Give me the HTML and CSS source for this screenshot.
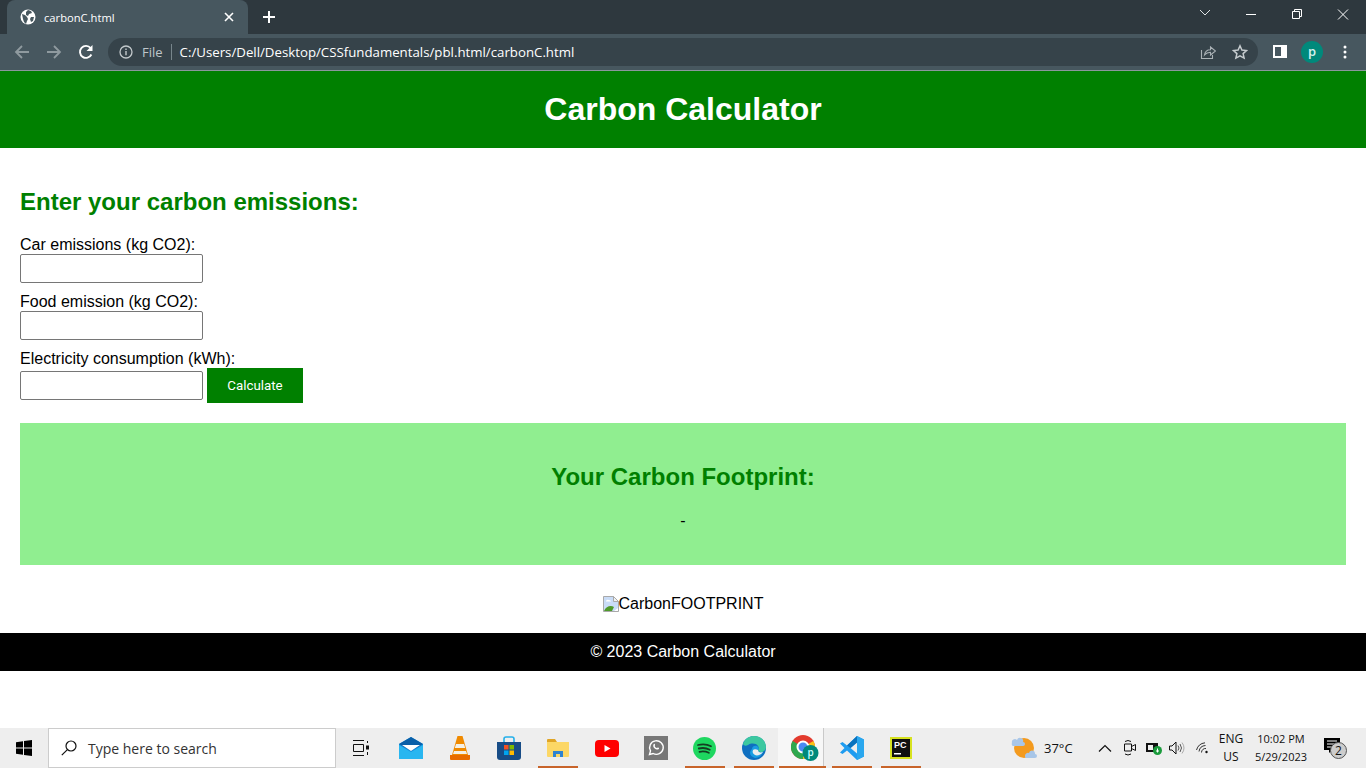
FILE: index.html
```html
<!DOCTYPE html>
<html>
<head>
    <title>carbonC.html</title>
    <link rel="stylesheet" href="styles.css">
</head>
<body>
    <div class="tabstrip">
        <div class="tab">
            <svg class="favicon" width="16" height="16" viewBox="0 0 16 16">
                <circle cx="8" cy="8" r="7.5" fill="#fff"/>
                <path d="M2 5l3 1 2 2 1 2-1 2-1 3-2-2-1-3zM8 1l3 1 1 2-3 1-1 2-2-1V3zM11 8h3l-1 4-2 1-1-3z" fill="#47575f"/>
            </svg>
            <span class="tab-title">carbonC.html</span>
            <svg class="tab-close" width="10" height="10" viewBox="0 0 10 10">
                <path d="M1 1l8 8M9 1l-8 8" stroke="#fff" stroke-width="1.6"/>
            </svg>
        </div>
        <svg class="new-tab" width="12" height="12" viewBox="0 0 12 12">
            <path d="M6 0v12M0 6h12" stroke="#fff" stroke-width="2"/>
        </svg>
        <div class="win-controls">
            <svg width="46" height="30" viewBox="0 0 46 30">
                <path d="M18 10l5 5 5-5" fill="none" stroke="#dfe3e5" stroke-width="1"/>
            </svg>
            <svg width="46" height="30" viewBox="0 0 46 30">
                <path d="M18 14.5h10" stroke="#fff" stroke-width="1"/>
            </svg>
            <svg width="46" height="30" viewBox="0 0 46 30">
                <path d="M18.5 11.5h7v7h-7zM20.5 11.5v-2h7v7h-2" fill="none" stroke="#fff" stroke-width="1"/>
            </svg>
            <svg width="46" height="30" viewBox="0 0 46 30">
                <path d="M18 9.5l10 10M28 9.5l-10 10" stroke="#fff" stroke-width="1"/>
            </svg>
        </div>
    </div>

    <div class="toolbar">
        <svg class="nav-icon" width="16" height="16" viewBox="0 0 16 16">
            <path d="M15 8H2M8 2L2 8l6 6" fill="none" stroke="#8f9a9f" stroke-width="1.8"/>
        </svg>
        <svg class="nav-icon" width="16" height="16" viewBox="0 0 16 16">
            <path d="M1 8h13M8 2l6 6-6 6" fill="none" stroke="#8f9a9f" stroke-width="1.8"/>
        </svg>
        <svg class="nav-icon" width="16" height="16" viewBox="0 0 16 16">
            <path d="M13.4 10.5A6 6 0 1 1 12.6 4" fill="none" stroke="#fff" stroke-width="1.9"/>
            <path d="M14.5 1v6h-6z" fill="#fff"/>
        </svg>
        <div class="omnibox">
            <svg class="info-icon" width="14" height="14" viewBox="0 0 14 14">
                <circle cx="7" cy="7" r="6" fill="none" stroke="#c3c9cc" stroke-width="1.3"/>
                <path d="M7 6v4.2M7 3.6v1.4" stroke="#c3c9cc" stroke-width="1.4"/>
            </svg>
            <span class="file-label">File</span>
            <span class="omni-sep"></span>
            <span class="url">C:/Users/Dell/Desktop/CSSfundamentals/pbl.html/carbonC.html</span>
            <svg class="share-icon" width="16" height="16" viewBox="0 0 16 16">
                <path d="M1.5 6v8.5h11V11" fill="none" stroke="#aab2b6" stroke-width="1.1"/>
                <path d="M4.5 11c.5-3.5 3-5.2 6-5.2V3l5 4-5 4V8.2c-2.5 0-4.5 1-6 2.8z" fill="none" stroke="#aab2b6" stroke-width="1.1"/>
            </svg>
            <svg class="star-icon" width="16" height="16" viewBox="0 0 16 16">
                <path d="M8 1.8L9.900 6l4.600.5-3.400 3.100 1 4.500L8 11.800l-4.100 2.300 1-4.500L1.500 6.500 6.100 6z" fill="none" stroke="#c5cbce" stroke-width="1.5"/>
            </svg>
        </div>
        <svg class="panel-icon" width="14" height="13" viewBox="0 0 14 13">
            <path d="M0 0h14v13H0z" fill="#fff"/>
            <path d="M2 2h6v9H2z" fill="#47575f"/>
        </svg>
        <div class="avatar">p</div>
        <svg class="menu-icon" width="4" height="14" viewBox="0 0 4 14">
            <circle cx="2" cy="2" r="1.5" fill="#fff"/>
            <circle cx="2" cy="7" r="1.5" fill="#fff"/>
            <circle cx="2" cy="12" r="1.5" fill="#fff"/>
        </svg>
    </div>

    <div class="page">
        <header class="site-header">
            <h1>Carbon Calculator</h1>
        </header>

        <main class="content">
            <h2>Enter your carbon emissions:</h2>
            <form class="calc-form">
                <label for="car">Car emissions (kg CO2):</label>
                <input type="text" id="car">
                <label for="food">Food emission (kg CO2):</label>
                <input type="text" id="food">
                <label for="elec">Electricity consumption (kWh):</label>
                <div class="last-row">
                    <input type="text" id="elec">
                    <button type="button">Calculate</button>
                </div>
            </form>

            <section class="result">
                <h2>Your Carbon Footprint:</h2>
                <p>-</p>
            </section>

            <div class="broken-img">
                <svg width="16" height="16" viewBox="0 0 16 16">
                    <path d="M.5.5h10l5 5v10H.5z" fill="#c9dcf7" stroke="#a9a9a9"/>
                    <path d="M3 5q1-2 3-1 2 0 2 1.500H3z" fill="#fff"/>
                    <path d="M1 15c2-5 7-6 10-4l-2 4z" fill="#4f9a2a"/>
                    <path d="M11 15l4-3v3z" fill="#fff"/>
                    <path d="M10.5.5v5h5z" fill="#f2f2f2" stroke="#a9a9a9"/>
                </svg><span>CarbonFOOTPRINT</span>
            </div>
        </main>

        <footer class="site-footer">© 2023 Carbon Calculator</footer>
    </div>

    <div class="taskbar">
        <div class="start">
            <svg width="16" height="16" viewBox="0 0 16 16">
                <path d="M0 2.300l7-1V7.500H0zM8 1.100l8-1.100v7.500H8zM0 8.500h7v6.200l-7-1zM8 8.500h8V16l-8-1.100z" fill="#000"/>
            </svg>
        </div>
        <div class="search">
            <svg width="16" height="16" viewBox="0 0 16 16">
                <circle cx="10" cy="6" r="5" fill="none" stroke="#111" stroke-width="1.2"/>
                <path d="M6.4 9.600L.8 15.200" stroke="#111" stroke-width="1.2"/>
            </svg>
            <span>Type here to search</span>
        </div>
        <div class="task-view">
            <svg width="16" height="16" viewBox="0 0 16 16">
                <path d="M0 .5h11M0 15.500h11M.5 4.500h10v7H.5zM14.500 1v2M14.500 12v3" fill="none" stroke="#111" stroke-width="1"/>
                <path d="M13 5.500h3v4h-3z" fill="#111"/>
            </svg>
        </div>

        <div class="app">
            <svg width="24" height="22" viewBox="0 0 24 22">
                <path d="M0 7L12 0l12 7v15H0z" fill="#1490df"/>
                <path d="M0 7L12 0l12 7-12 7z" fill="#0a5fa8"/>
                <path d="M3 8h18l-9 6z" fill="#fff"/>
                <path d="M0 8l12 7 12-7v14H0z" fill="#29b6f0"/>
            </svg>
        </div>
        <div class="app">
            <svg width="20" height="24" viewBox="0 0 20 24">
                <path d="M7.500 0h5L18 19H2z" fill="#f08a00"/>
                <path d="M6 8h8l1.200 4H4.800zM4 15h12l1 3H3z" fill="#f4f0e6"/>
                <path d="M0 19h20v4q0 1-1 1H1q-1 0-1-1z" fill="#e86c00"/>
            </svg>
        </div>
        <div class="app">
            <svg width="24" height="24" viewBox="0 0 24 24">
                <path d="M7 7V3q0-2 2-2h6q2 0 2 2v4" fill="none" stroke="#25b0ea" stroke-width="1.6"/>
                <path d="M0 6h24v15q0 3-3 3H3q-3 0-3-3z" fill="#174c86"/>
                <path d="M7 9h4.500v4.500H7z" fill="#f25022"/>
                <path d="M12.500 9H17v4.500h-4.500z" fill="#7fba00"/>
                <path d="M7 14.500h4.500V19H7z" fill="#00a4ef"/>
                <path d="M12.500 14.500H17V19h-4.500z" fill="#ffb900"/>
            </svg>
        </div>
        <div class="app running">
            <svg width="22" height="18" viewBox="0 0 22 18">
                <path d="M0 1q0-1 1-1h7l2 3H0z" fill="#e0a526"/>
                <path d="M0 3h22v14q0 1-1 1H1q-1 0-1-1z" fill="#fcd766"/>
                <path d="M6 12h10v6h-3v-3H9v3H6z" fill="#2f83d1"/>
            </svg>
        </div>
        <div class="app">
            <svg width="24" height="17" viewBox="0 0 24 17">
                <rect width="24" height="17" rx="4" fill="#f00"/>
                <path d="M9.500 5l6 3.500-6 3.500z" fill="#fff"/>
            </svg>
        </div>
        <div class="app">
            <svg width="24" height="24" viewBox="0 0 24 24">
                <path d="M0 0h24v24H0z" fill="#777"/>
                <path d="M5.500 18.500l1-3.600a6.800 6.800 0 1 1 2.600 2.600z" fill="none" stroke="#fff" stroke-width="1.4"/>
                <path d="M9.500 8.500c.5-1 1.200-.8 1.500 0 .3 1-.5 1.200-.2 1.800.5 1 1.200 1.500 2 1.800.6 0 .8-1 1.500-.6 1 .5 1 1.200.2 1.800-1 .7-3 0-4.300-1.300-1-1-1.200-2.500-.7-3.500z" fill="#fff"/>
            </svg>
        </div>
        <div class="app running">
            <svg width="23" height="23" viewBox="0 0 23 23">
                <circle cx="11.500" cy="11.500" r="11.500" fill="#1ed760"/>
                <path d="M5 8c4-1 9-.8 13 1.200M5.800 11.500c3.500-.8 7.700-.5 11 1.200M6.500 14.800c3-.6 6.500-.4 9.300 1" fill="none" stroke="#143d22" stroke-width="1.8" stroke-linecap="round"/>
            </svg>
        </div>
        <div class="app running">
            <svg width="24" height="24" viewBox="0 0 24 24">
                <circle cx="12" cy="12" r="12" fill="#0f6fc0"/>
                <path d="M1 8C3 2 8 0 12 0c7 0 12 5 12 11 0 3-2 5-5 5-2 0-3-1-3-2 1-1 1-3 0-4-2-3-7-3-10-1-2 1-4 1-5-1z" fill="#3cc8a0"/>
                <path d="M10 13c0-2 2-4 5-3 2 1 2 3 1 4 0 2 2 3 5 2-1 3-4 6-8 6-3-1-5-3-5-5 0-2 1-3 2-4z" fill="#1b9de2"/>
                <path d="M11 14c1-1 3-1 5 0 0 2 2 3 5 2-2 3-6 4-8 3-2-1-3-3-2-5z" fill="#eeeeee"/>
            </svg>
        </div>
        <div class="app running active">
            <svg class="chrome-icon" width="28" height="26" viewBox="0 0 28 26">
                <circle cx="12" cy="12" r="12" fill="#e33b2e"/>
                <path d="M12 12L1.600 6A12 12 0 0 0 12 24z" fill="#2fa84f"/>
                <path d="M12 12v12A12 12 0 0 0 22.400 6z" fill="#fbc116"/>
                <circle cx="12" cy="12" r="5.500" fill="#4a8af4" stroke="#fff" stroke-width="2"/>
                <circle cx="19.500" cy="18" r="8" fill="#00897b"/>
                <text x="19.500" y="21" class="badge-text">p</text>
            </svg>
        </div>
        <div class="app running">
            <svg width="24" height="24" viewBox="0 0 24 24">
                <path d="M17 0l7 3.500v17L17 24 7 14.500 2.500 18 0 16.500 4.500 12 0 7.500 2.500 6 7 9.500z" fill="#1f9cf0"/>
                <path d="M17 6.500L10.500 12l6.500 5.500z" fill="#eeeeee"/>
                <path d="M17 0l7 3.500v17L17 24z" fill="#2aa7ee"/>
                <path d="M17 6.500L10.500 12 7 9.500 17 0z" fill="#0a72bd"/>
            </svg>
        </div>
        <div class="app running">
            <svg width="22" height="22" viewBox="0 0 22 22">
                <path d="M0 0h22v22H0z" fill="#d7e21f"/>
                <path d="M2 2h18v18H2z" fill="#111"/>
                <text x="4" y="11" class="pc-text">PC</text>
                <path d="M4 16h7v1.500H4z" fill="#fff"/>
            </svg>
        </div>

        <div class="tray">
            <svg class="weather" width="26" height="24" viewBox="0 0 26 24">
                <circle cx="13" cy="12" r="10" fill="#f39a1e"/>
                <path d="M1 7a3 3 0 0 1 5-3 3 3 0 0 1 6 2 2 2 0 0 1 0 4H3a2 2 0 0 1-2-3zM14 20a3 3 0 0 1 4-3 3 3 0 0 1 6 1 2 2 0 0 1 0 4h-9a2 2 0 0 1-1-2z" fill="#a8c6e8"/>
            </svg>
            <span class="temp">37°C</span>
            <svg class="caret" width="14" height="8" viewBox="0 0 14 8">
                <path d="M1 7.500l6-6 6 6" fill="none" stroke="#111" stroke-width="1.2"/>
            </svg>
            <svg class="tray-icon meet" width="14" height="18" viewBox="0 0 14 18">
                <path d="M1.500 5h7v7h-7zM8.500 7.500l4-2v6l-4-2zM2 2.500q3-2 6 0M2 15q3 2 6 0" fill="none" stroke="#111" stroke-width="1"/>
            </svg>
            <svg class="tray-icon" width="16" height="14" viewBox="0 0 16 14">
                <path d="M0 2h12v9H0z" fill="#111"/>
                <path d="M2 4h5v5H2z" fill="#eee"/>
                <circle cx="11.500" cy="9.500" r="4.500" fill="#1a9b3c"/>
                <path d="M10 10h3M11.500 7.500v4" stroke="#fff"/>
            </svg>
            <svg class="tray-icon" width="16" height="14" viewBox="0 0 16 14">
                <path d="M.5 5h2.500l4-4v12l-4-4H.5z" fill="none" stroke="#111" stroke-width="1"/>
                <path d="M9 4.500q2 2.500 0 5M11 3q3 4 0 8" fill="none" stroke="#555" stroke-width="1"/>
                <path d="M13 1.500q4 5.500 0 11" fill="none" stroke="#aaa" stroke-width="1"/>
            </svg>
            <svg class="tray-icon wifi" width="14" height="12" viewBox="0 0 14 12">
                <path d="M.5 8A10 10 0 0 1 9 .8M3 9.500A7 7 0 0 1 9.500 3.500M5.500 10.500A4 4 0 0 1 10 6.500" fill="none" stroke="#333" stroke-width="1"/>
                <circle cx="10.500" cy="10" r="1.200" fill="#111"/>
            </svg>
            <div class="lang"><span>ENG</span><span>US</span></div>
            <div class="clock"><span>10:02 PM</span><span>5/29/2023</span></div>
            <div class="notif">
                <svg width="16" height="16" viewBox="0 0 16 16">
                    <path d="M0 0h16v12H8l-3 3v-3H0z" fill="#000"/>
                    <path d="M3 3h10M3 6h10M3 9h7" stroke="#fff" stroke-width="1"/>
                </svg>
                <span class="notif-count">2</span>
            </div>
        </div>
    </div>
</body>
</html>
```

FILE: styles.css
```css
* {
    box-sizing: border-box;
}

html, body {
    height: 100%;
}

body {
    margin: 0;
    display: flex;
    flex-direction: column;
    height: 100vh;
    overflow: hidden;
    font-family: "Liberation Sans", Arial, sans-serif;
    font-size: 16px;
    color: #000;
    background-color: #fff;
}

/* browser bits */
.tabstrip {
    display: flex;
    align-items: center;
    flex: 0 0 34px;
    padding-left: 7px;
    background-color: #2e383e;
}

.tab {
    display: flex;
    align-items: center;
    width: 241px;
    height: 34px;
    padding: 0 0 0 13px;
    background-color: #47575f;
    border-radius: 8px 8px 0 0;
}

.tab-title {
    width: 163px;
    margin-left: 8px;
    color: #fff;
    font-family: "Open Sans", sans-serif;
    font-size: 11.2px;
}

.tab-close {
    margin-left: 17px;
}

.new-tab {
    margin-left: 15px;
}

.win-controls {
    display: flex;
    margin-left: auto;
    align-self: flex-start;
}

.win-controls svg {
    display: block;
}

.toolbar {
    display: flex;
    align-items: center;
    flex: 0 0 37px;
    padding: 0 0 1px 14px;
    background-color: #47575f;
    border-bottom: 1px solid #8b979c;
}

.nav-icon {
    margin-right: 16px;
}

.omnibox {
    display: flex;
    align-items: center;
    width: 1150px;
    height: 28px;
    margin-left: -2px;
    padding-left: 11px;
    background-color: #36434a;
    border-radius: 14px;
}

.file-label {
    margin-left: 9px;
    color: #bfc6ca;
    font-family: "Open Sans", sans-serif;
    font-size: 13px;
}

.omni-sep {
    width: 1px;
    height: 16px;
    margin: 0 8px;
    background-color: #77858b;
}

.url {
    color: #fff;
    font-family: "Open Sans", sans-serif;
    font-size: 13.25px;
}

.share-icon {
    margin-left: auto;
}

.star-icon {
    margin: 0 10px 0 16px;
}

.panel-icon {
    margin-left: 15px;
}

.avatar {
    width: 22px;
    height: 22px;
    margin-left: 14px;
    border-radius: 50%;
    background-color: #00897b;
    color: #d6f2ee;
    font-family: "Open Sans", sans-serif;
    font-size: 13px;
    font-weight: 600;
    line-height: 20px;
    text-align: center;
}

.menu-icon {
    margin-left: 20px;
}

/* the actual page */
.page {
    flex: 1;
    min-height: 0;
}

.site-header {
    padding: 20px;
    background-color: #008000;
    color: #fff;
    text-align: center;
}

h1 {
    margin: 0;
    font-size: 32px;
    line-height: 37px;
}

.content {
    padding: 20px 20px 0;
}

h2 {
    margin: 20px 0;
    color: #008000;
    font-size: 24px;
    line-height: 27px;
}

.calc-form label {
    display: block;
    line-height: 19px;
}

.calc-form input {
    display: block;
    width: 183px;
    height: 29px;
    margin: 0 0 9px;
    padding: 5px;
    border: 1px solid #767676;
    border-radius: 2px;
    background-color: #fff;
}

.last-row {
    display: flex;
    align-items: flex-end;
}

.last-row input {
    margin: 0 0 3px;
}

.last-row button {
    width: 96px;
    height: 35px;
    margin-left: 4px;
    border: none;
    background-color: #008000;
    color: #fff;
    font-family: Roboto, sans-serif;
    font-size: 13.33px;
    font-weight: 400;
}

.result {
    margin-top: 20px;
    height: 142px;
    padding: 20px;
    background-color: #90ee90;
    text-align: center;
}

.result h2 {
    margin-bottom: 22px;
}

.result p {
    margin: 0;
    line-height: 18px;
}

.broken-img {
    display: flex;
    justify-content: center;
    align-items: center;
    height: 68px;
    padding-top: 9px;
}

.site-footer {
    height: 38px;
    background-color: #000;
    color: #fff;
    line-height: 38px;
    text-align: center;
}

/* windows taskbar */
.taskbar {
    display: flex;
    align-items: center;
    flex: 0 0 40px;
    background-color: #eeeeee;
    color: #111;
    font-family: "Open Sans", sans-serif;
}

.start {
    display: flex;
    justify-content: center;
    align-items: center;
    width: 48px;
    height: 40px;
}

.search {
    display: flex;
    align-items: center;
    width: 288px;
    height: 40px;
    padding-left: 12px;
    background-color: #fff;
    border: 1px solid #cccccc;
    font-size: 14px;
    color: #333;
}

.search span {
    margin-left: 11px;
}

.task-view {
    display: flex;
    justify-content: center;
    align-items: center;
    width: 50px;
    height: 40px;
}

.app {
    display: flex;
    justify-content: center;
    align-items: center;
    width: 49px;
    height: 40px;
    position: relative;
}

.app.running::after {
    content: "";
    position: absolute;
    left: 5px;
    right: 4px;
    bottom: 0;
    height: 2px;
    background-color: #c8642a;
}

.app.active {
    background: linear-gradient(to right, #f7f7f7 45px, #c9c9c9 45px, #c9c9c9 46px, transparent 46px);
}

.app.active::after {
    left: 1px;
    right: 1px;
}

.chrome-icon {
    margin-left: 4px;
}

.badge-text {
    fill: #cff;
    font-family: "Open Sans", sans-serif;
    font-size: 10px;
    font-weight: 600;
    text-anchor: middle;
}

.pc-text {
    fill: #fff;
    font-family: "Liberation Sans", sans-serif;
    font-size: 9px;
    font-weight: 700;
}

.tray {
    display: flex;
    align-items: center;
    height: 40px;
    margin-left: auto;
    font-size: 12px;
}

.weather {
    margin-right: 7px;
}

.temp {
    width: 32px;
    margin-right: 22px;
    font-size: 13px;
}

.caret {
    margin-right: 11px;
}

.tray-icon {
    margin-right: 7px;
}

.tray-icon.meet {
    margin-right: 9px;
}

.wifi {
    margin-left: 4px;
    margin-right: 6px;
}

.lang, .clock {
    display: flex;
    flex-direction: column;
    align-items: center;
    line-height: 18px;
}

.lang {
    width: 30px;
}

.clock {
    width: 64px;
    margin-left: 3px;
    font-size: 11px;
}

.notif {
    position: relative;
    width: 36px;
    height: 20px;
    margin: 0 11px 0 6px;
    padding-left: 5px;
}

.notif-count {
    position: absolute;
    left: 11px;
    top: 4px;
    width: 17px;
    height: 17px;
    border-radius: 50%;
    border: 1px solid #555;
    background-color: #ccc;
    font-size: 12px;
    line-height: 15px;
    text-align: center;
}
```
